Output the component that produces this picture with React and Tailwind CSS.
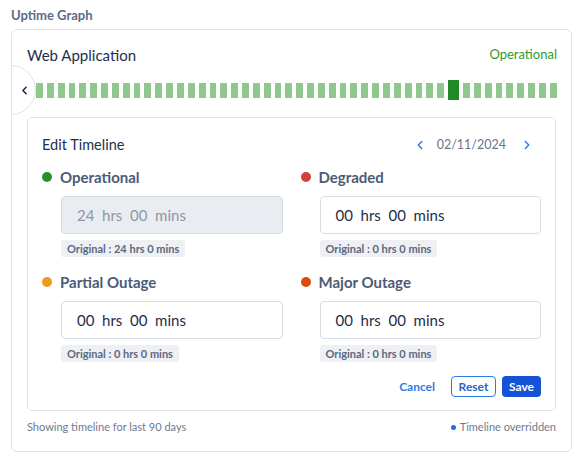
import { ChevronLeft, ChevronRight } from 'lucide-react';

const BAR_COUNT = 48;
const ACTIVE_BAR = 38;

function StatusField({ dot, label, value, original, disabled }) {
  return (
    <div className="flex flex-col">
      <div className="flex items-center gap-[8px] h-[20px]">
        <span className={`w-[10px] h-[10px] rounded-full ${dot}`} />
        <span className="text-[15px] font-bold text-[#4b5b76]">{label}</span>
      </div>
      <div
        className={`ml-[19px] mt-[9px] h-[38px] rounded-[4px] border border-[#d8dde5] flex items-center px-[15px] text-[15px] whitespace-pre ${
          disabled ? 'bg-[#e9ecf1] text-[#8d97a8]' : 'bg-white text-[#1e2d48]'
        }`}
      >
        {value}
      </div>
      <div className="ml-[19px] mt-[6px] flex">
        <span className="h-[17px] leading-[17px] px-[6px] rounded-[3px] bg-[#eef0f4] text-[11px] font-bold text-[#5b6880]">
          {original}
        </span>
      </div>
    </div>
  );
}

export default function App() {
  return (
    <div className="w-[582px] h-[462px] bg-white px-[11px] pt-[5px] font-['Lato',sans-serif]">
      <h2 className="text-[13px] font-bold text-[#5a6b85] h-[20px] leading-[20px]">Uptime Graph</h2>
      <div className="mt-[4px] w-[561px] border border-[#dde2ea] rounded-[6px] relative overflow-hidden">
        <div className="flex items-center justify-between pl-[15px] pr-[14px] pt-[13px] h-[37px]">
          <span className="text-[15px] text-[#1e2f4d]">Web Application</span>
          <span className="text-[13px] text-[#2f9a30]">Operational</span>
        </div>
        <div className="flex items-center h-[46px] pr-[14px]">
          <div className="w-[24px] h-[50px] shrink-0 relative">
            <div className="absolute -left-[26px] top-0 w-[50px] h-[50px] rounded-full border border-[#dde2ea] bg-white flex items-center justify-end pr-[4px]">
              <ChevronLeft size={13} strokeWidth={3} className="text-[#1e2f4d]" />
            </div>
          </div>
          <div className="flex-1 flex items-center gap-[4px] h-[20px]">
            {Array.from({ length: BAR_COUNT }).map((_, i) =>
              i === ACTIVE_BAR ? (
                <div key={i} className="w-[11px] h-[20px] shrink-0 bg-[#1f8a25]" />
              ) : (
                <div key={i} className="flex-1 h-[15px] bg-[#8fc78f]" />
              )
            )}
          </div>
        </div>
        <div className="mx-[15px] mt-[4px] border border-[#dde2ea] rounded-[5px] px-[14px] pt-[17px] pb-[13px]">
          <div className="flex items-center justify-between h-[20px]">
            <span className="text-[14.5px] text-[#1e2f4d]">Edit Timeline</span>
            <div className="flex items-center text-[12.5px] text-[#6a778c] pr-[7px]">
              <ChevronLeft size={14} strokeWidth={2.5} className="text-[#2f7be5]" />
              <span className="ml-[10px] mr-[14px]">02/11/2024</span>
              <ChevronRight size={14} strokeWidth={2.5} className="text-[#2f7be5]" />
            </div>
          </div>
          <div className="grid grid-cols-2 gap-x-[18px] gap-y-[15px] mt-[12px]">
            <StatusField dot="bg-[#249327]" label="Operational" value="24  hrs  00  mins" original="Original : 24 hrs 0 mins" disabled />
            <StatusField dot="bg-[#d1423a]" label="Degraded" value="00  hrs  00  mins" original="Original : 0 hrs 0 mins" />
            <StatusField dot="bg-[#ef9a1f]" label="Partial Outage" value="00  hrs  00  mins" original="Original : 0 hrs 0 mins" />
            <StatusField dot="bg-[#dc4a0d]" label="Major Outage" value="00  hrs  00  mins" original="Original : 0 hrs 0 mins" />
          </div>
          <div className="flex items-center justify-end gap-[6px] mt-[14px]">
            <button className="px-[10px] h-[21px] text-[12px] font-bold text-[#2f7be5]">Cancel</button>
            <button className="w-[45px] h-[21px] rounded-[4px] border border-[#2f7be5] text-[12px] font-bold text-[#2a64c8] bg-white">Reset</button>
            <button className="w-[39px] h-[21px] rounded-[4px] bg-[#1453d6] text-[12px] font-bold text-white">Save</button>
          </div>
        </div>
        <div className="flex items-start justify-between px-[15px] pt-[9px] h-[40px] text-[11px] leading-[14px] text-[#6e7a8e]">
          <span>Showing timeline for last 90 days</span>
          <span className="flex items-center gap-[4px]">
            <span className="w-[5px] h-[5px] rounded-full bg-[#1f6fe0]" />
            Timeline overridden
          </span>
        </div>
      </div>
    </div>
  );
}
